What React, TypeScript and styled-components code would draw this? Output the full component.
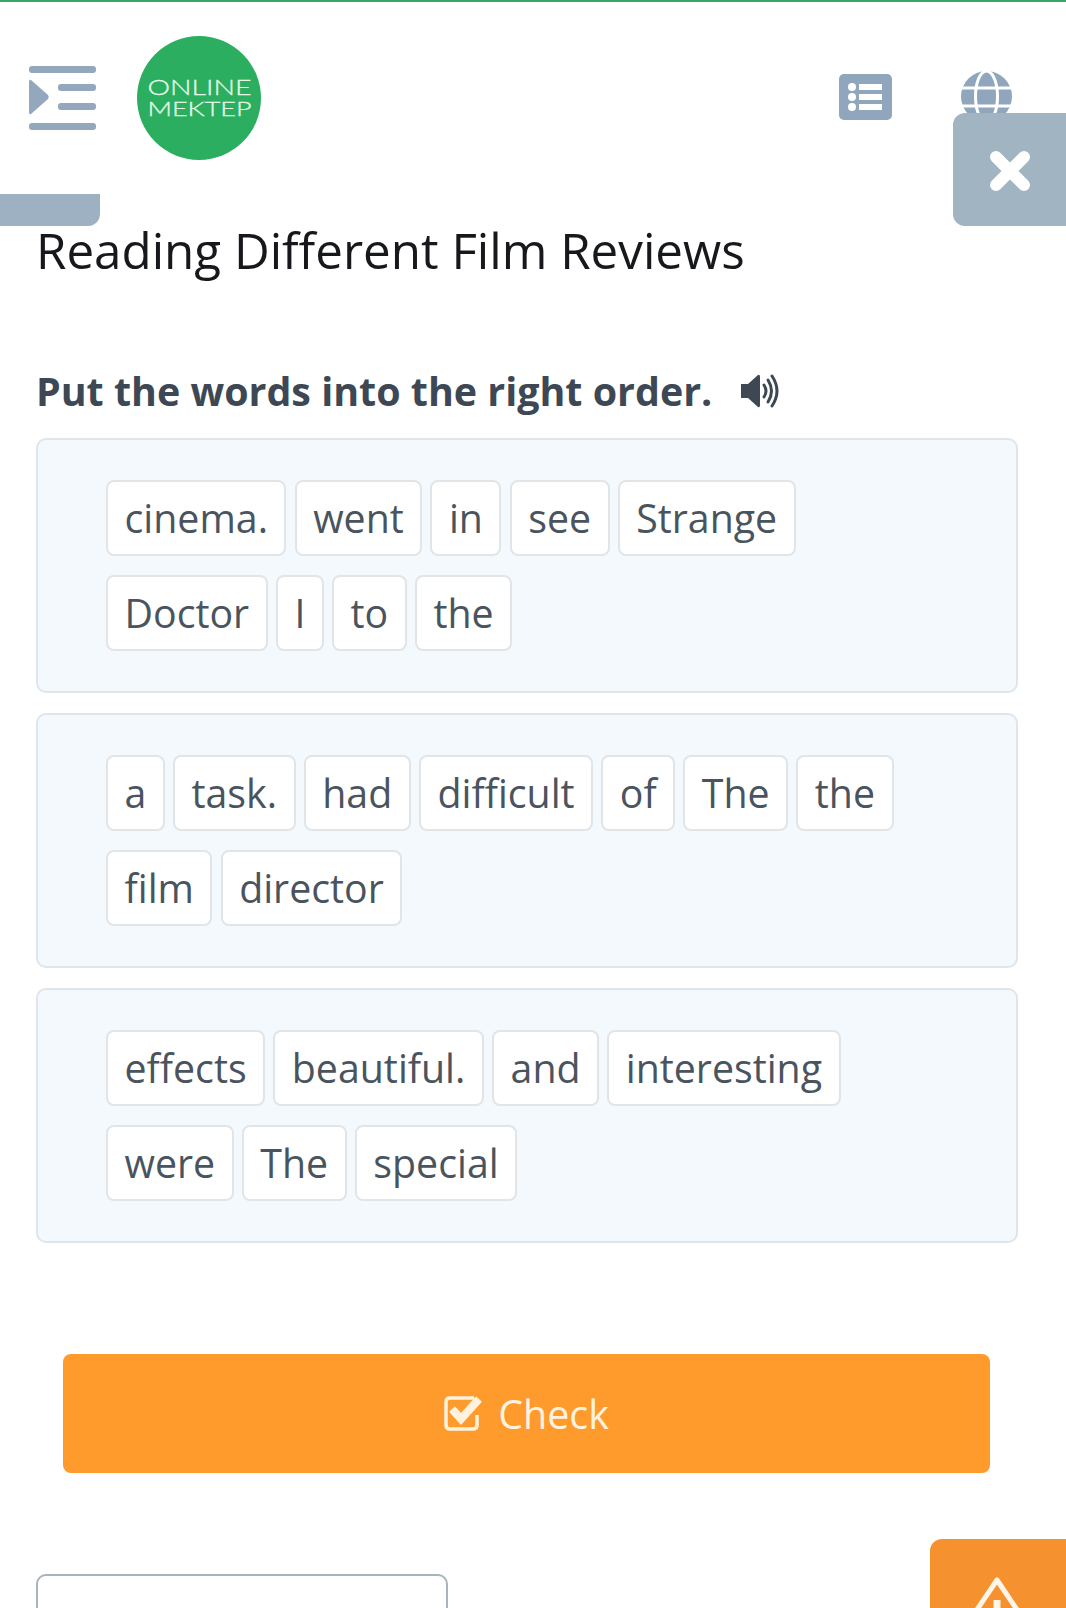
import React from 'react'
import styled, { createGlobalStyle } from 'styled-components'

const GlobalStyle = createGlobalStyle`
  html, body {
    margin: 0;
    padding: 0;
    background: #fff;
    font-family: "Open Sans", "Liberation Sans", sans-serif;
  }
  body {
    height: 1608px;
    overflow: hidden;
  }
`

const Page = styled.div`
  position: relative;
  width: 1066px;
  height: 1608px;
  overflow: hidden;
  border-top: 2px solid #35a866;
  box-sizing: border-box;
`

const Header = styled.header`
  display: flex;
  align-items: center;
  justify-content: space-between;
  padding: 34px 54px 0 29px;
`

const HeaderLeft = styled.div`
  display: flex;
  align-items: center;
  gap: 41px;
`

const HeaderRight = styled.div`
  display: flex;
  align-items: center;
  gap: 69px;
  margin-top: -3px;
`

const SideTab = styled.div`
  position: absolute;
  left: 0;
  top: 192px;
  width: 100px;
  height: 32px;
  background: #9db1c2;
  border-bottom-right-radius: 12px;
`

const CloseBox = styled.div`
  position: absolute;
  right: 0;
  top: 111px;
  width: 113px;
  height: 113px;
  padding-top: 3px;
  box-sizing: border-box;
  display: flex;
  align-items: center;
  justify-content: center;
  background: #a0b4c1;
  border-radius: 12px 0 0 12px;
`

const Content = styled.main`
  padding: 57px 48px 0 36px;
`

const Title = styled.h1`
  margin: 0;
  font-size: 49.3px;
  line-height: 66px;
  font-weight: 400;
  color: #16181b;
`

const Instruction = styled.div`
  display: flex;
  align-items: center;
  gap: 29px;
  margin: 82px 0 21px 0;
`

const InstructionText = styled.h2`
  margin: 0;
  font-size: 39.4px;
  line-height: 52px;
  font-weight: 700;
  color: #3d4854;
`

const Panels = styled.div`
  display: flex;
  flex-direction: column;
  gap: 20px;
`

const Panel = styled.section`
  display: flex;
  flex-wrap: wrap;
  align-content: flex-start;
  gap: 19px 8.2px;
  height: 255px;
  box-sizing: border-box;
  padding: 40px 68px 0;
  background: #f4f9fd;
  border: 2px solid #dfe5ea;
  border-radius: 10px;
`

const Word = styled.span`
  display: flex;
  align-items: center;
  height: 76px;
  box-sizing: border-box;
  padding: 0 16.5px;
  font-size: 39.3px;
  color: #4a545e;
  background: #fff;
  border: 2px solid #e1e5e8;
  border-radius: 8px;
`

const CheckButton = styled.button`
  display: flex;
  align-items: center;
  justify-content: center;
  gap: 14px;
  width: 927px;
  height: 119px;
  margin: 111px 0 0 27px;
  padding: 0;
  font-family: inherit;
  font-size: 39.4px;
  color: #fff3e0;
  background: #fe9b2c;
  border: none;
  border-radius: 8px;
`

const Footer = styled.div`
  display: flex;
  align-items: flex-start;
  justify-content: space-between;
  margin-top: 66px;
  padding-left: 36px;
`

const AnswerBox = styled.div`
  width: 412px;
  height: 120px;
  margin-top: 35px;
  box-sizing: border-box;
  background: #fff;
  border: 2px solid #a8b4ba;
  border-radius: 10px;
`

const WarningTab = styled.div`
  display: flex;
  justify-content: center;
  width: 136px;
  height: 120px;
  padding: 37px 2px 0 0;
  box-sizing: border-box;
  background: #f5922f;
  border-top-left-radius: 12px;
`

const exercises = [
  ['cinema.', 'went', 'in', 'see', 'Strange', 'Doctor', 'I', 'to', 'the'],
  ['a', 'task.', 'had', 'difficult', 'of', 'The', 'the', 'film', 'director'],
  ['effects', 'beautiful.', 'and', 'interesting', 'were', 'The', 'special'],
]

const MenuIcon = () => (
  <svg width="67" height="64" viewBox="0 0 67 64" fill="#93a8bd">
    <rect x="0" y="0" width="67" height="7" rx="3" />
    <rect x="29" y="18" width="38" height="7" rx="3" />
    <rect x="29" y="37" width="38" height="7" rx="3" />
    <rect x="0" y="57" width="67" height="7" rx="3" />
    <path d="M2 14 L19 29 Q20.500 31 19 33 L2 48 Q0 49 0 46 L0 16 Q0 13 2 14 Z" />
  </svg>
)

const Logo = () => (
  <svg width="124" height="124" viewBox="0 0 124 124">
    <circle cx="62" cy="62" r="62" fill="#2bae5f" />
    <g
      fill="#e4fae9"
      stroke="#e4fae9"
      strokeWidth="0.3"
      fontFamily="Lato, 'Open Sans', sans-serif"
      fontWeight="300"
    >
      <text x="10.500" y="59" fontSize="22" textLength="104" lengthAdjust="spacingAndGlyphs">
        ONLINE
      </text>
      <text x="10.500" y="80" fontSize="19.5" textLength="104" lengthAdjust="spacingAndGlyphs">
        MEKTEP
      </text>
    </g>
  </svg>
)

const ListIcon = () => (
  <svg width="53" height="46" viewBox="0 0 53 46">
    <rect width="53" height="46" rx="5" fill="#8fa6bc" />
    <g fill="#fff">
      <circle cx="13" cy="13" r="4" />
      <circle cx="13" cy="23" r="4" />
      <circle cx="13" cy="33" r="4" />
      <rect x="20" y="10" width="23" height="6" />
      <rect x="20" y="20" width="23" height="6" />
      <rect x="20" y="30" width="23" height="6" />
    </g>
  </svg>
)

const GlobeIcon = () => (
  <svg width="51" height="51" viewBox="0 0 51 51">
    <circle cx="25.500" cy="25.500" r="25.500" fill="#8fa6bc" />
    <g fill="none" stroke="#fff" strokeWidth="3">
      <ellipse cx="25.500" cy="25.500" rx="11" ry="25.500" />
      <line x1="0" y1="17" x2="51" y2="17" />
      <line x1="0" y1="35" x2="51" y2="35" />
    </g>
  </svg>
)

const CloseIcon = () => (
  <svg width="42" height="42" viewBox="0 0 42 42" fill="none">
    <path d="M7 7 L35 35 M35 7 L7 35" stroke="#fff" strokeWidth="12" strokeLinecap="round" />
  </svg>
)

const SpeakerIcon = () => (
  <svg width="38" height="34" viewBox="0 0 38 34" fill="none">
    <path d="M0 10 H7 L17 1 Q19 0 19 3 V31 Q19 34 17 33 L7 24 H0 Z" fill="#3d4854" />
    <g stroke="#3d4854" strokeWidth="3" strokeLinecap="round">
      <path d="M23 11 Q27 17 23 23" />
      <path d="M27 6 Q34 17 27 28" />
      <path d="M31 2 Q41 17 31 32" />
    </g>
  </svg>
)

const CheckSquareIcon = () => (
  <svg width="40" height="37" viewBox="0 0 40 37" fill="none">
    <path
      d="M30 3 H6 Q2 3 2 7 V30 Q2 34 6 34 H29 Q33 34 33 30 V20"
      stroke="#fff3e0"
      strokeWidth="3.500"
    />
    <path d="M8 14 L17 24 L35 4" stroke="#fff3e0" strokeWidth="8" />
  </svg>
)

const WarningIcon = () => (
  <svg width="60" height="46" viewBox="0 0 60 46" fill="none">
    <path d="M30 4 L57 44 H3 Z" stroke="#fff6e8" strokeWidth="5" strokeLinejoin="round" />
    <rect x="26.500" y="24" width="7" height="20" fill="#fff6e8" />
  </svg>
)

const App = () => {
  return (
    <Page>
      <GlobalStyle />
      <Header>
        <HeaderLeft>
          <MenuIcon />
          <Logo />
        </HeaderLeft>
        <HeaderRight>
          <ListIcon />
          <GlobeIcon />
        </HeaderRight>
      </Header>
      <SideTab />
      <CloseBox>
        <CloseIcon />
      </CloseBox>
      <Content>
        <Title>Reading Different Film Reviews</Title>
        <Instruction>
          <InstructionText>Put the words into the right order.</InstructionText>
          <SpeakerIcon />
        </Instruction>
        <Panels>
          {exercises.map((words, i) => (
            <Panel key={i}>
              {words.map((word, j) => (
                <Word key={j}>{word}</Word>
              ))}
            </Panel>
          ))}
        </Panels>
        <CheckButton>
          <CheckSquareIcon />
          Check
        </CheckButton>
      </Content>
      <Footer>
        <AnswerBox />
        <WarningTab>
          <WarningIcon />
        </WarningTab>
      </Footer>
    </Page>
  )
}

export default App
